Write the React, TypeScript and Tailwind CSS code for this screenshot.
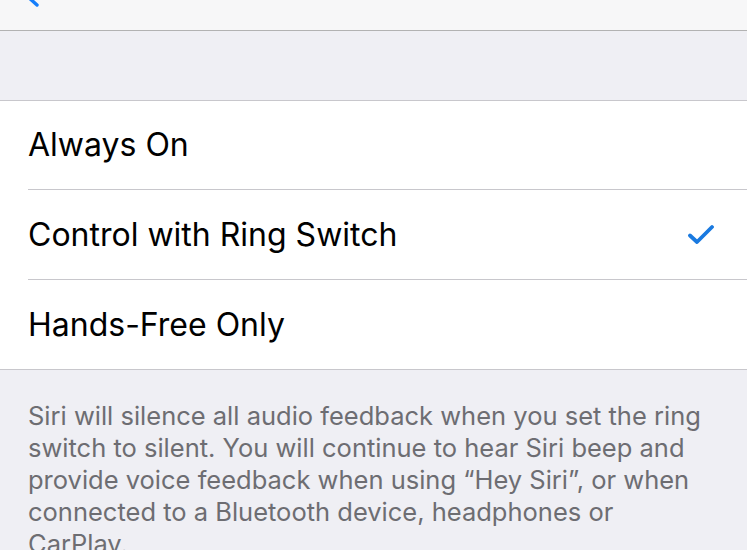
import React from 'react';

const options = [
  { label: 'Always On', checked: false, h: 'h-[89px]' },
  { label: 'Control with Ring Switch', checked: true, h: 'h-[90px]' },
  { label: 'Hands-Free Only', checked: false, h: 'h-[89px]' },
];

function Check() {
  return (
    <svg width="26" height="21" viewBox="0 0 26 21" fill="none">
      <path d="M2 11.5 L9 18 L24 3" stroke="#1a7ae0" strokeWidth="3.8" strokeLinecap="round" strokeLinejoin="round" />
    </svg>
  );
}

function App() {
  return (
    <div className="w-[747px] h-[550px] overflow-hidden bg-[#efeff4] font-['Inter','Liberation_Sans',sans-serif]">
      {/* nav bar, mostly cropped off */}
      <div className="relative h-[31px] bg-[#f7f7f8] border-b border-[#b2b2b2]">
        <svg className="absolute left-[22px] top-[-14px]" width="20" height="22" viewBox="0 0 20 22" fill="none">
          <path d="M15 1 L5 10 L15 19" stroke="#157efb" strokeWidth="3.4" strokeLinecap="round" strokeLinejoin="round" />
        </svg>
      </div>

      <div className="h-[69px]" />

      <div className="bg-white border-y border-[#c8c7cc]">
        {options.map((o, i) => (
          <div key={o.label} className="pl-[28px]">
            <div
              className={
                o.h +
                ' flex items-center justify-between pr-[33px] ' +
                (i < options.length - 1 ? 'border-b border-[#c8c7cc]' : '')
              }
            >
              <span className="text-[32px] text-black">{o.label}</span>
              {o.checked && <Check />}
            </div>
          </div>
        ))}
      </div>

      <p className="pt-[30px] px-[28px] text-[25.5px] leading-[32px] text-[#6d6d72]">
        Siri will silence all audio feedback when you set the ring switch to silent. You will continue to hear Siri beep and provide voice feedback when using “Hey Siri”, or when connected to a Bluetooth device, headphones or CarPlay.
      </p>
    </div>
  );
}

export default App;
